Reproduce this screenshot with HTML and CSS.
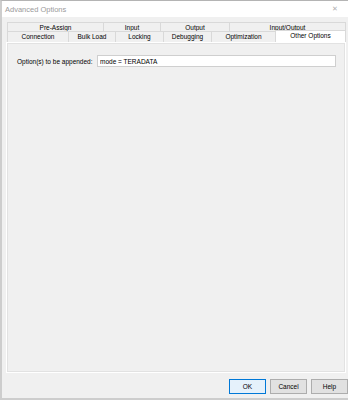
FILE: index.html
```html
<!DOCTYPE html>
<html lang="en">
<head>
    <meta charset="UTF-8">
    <title>Advanced Options</title>
    <link rel="stylesheet" href="styles.css">
</head>
<body>
    <div class="window">
        <div class="titlebar">
            <span class="title">Advanced Options</span>
            <span class="close">&#x2715;</span>
        </div>

        <div class="content">
            <div class="tabs">
                <div class="tab-row row-top">
                    <div class="tab">Pre-Assign</div>
                    <div class="tab">Input</div>
                    <div class="tab">Output</div>
                    <div class="tab">Input/Output</div>
                </div>
                <div class="tab-row row-bottom">
                    <div class="tab">Connection</div>
                    <div class="tab">Bulk Load</div>
                    <div class="tab">Locking</div>
                    <div class="tab">Debugging</div>
                    <div class="tab">Optimization</div>
                    <div class="tab active">Other Options</div>
                </div>
            </div>

            <div class="panel">
                <div class="field">
                    <label for="opts">Option(s) to be appended:</label>
                    <input type="text" id="opts" value="mode = TERADATA">
                </div>
            </div>

            <div class="buttons">
                <button class="btn default">OK</button>
                <button class="btn">Cancel</button>
                <button class="btn">Help</button>
            </div>
        </div>
    </div>
</body>
</html>
```

FILE: styles.css
```css
body {
    margin: 0;
    background-color: #f0f0f0;
    font-family: "Liberation Sans", Arial, sans-serif;
    font-size: 6.5px;
    color: #000;
}

.window {
    height: 400px;
    box-sizing: border-box;
    border-top: 1px solid #b4b4b4;
    border-left: 2px solid #cdcdcd;
    border-bottom: 2px solid #cdcdcd;
    display: flex;
    flex-direction: column;
}

.titlebar {
    height: 16px;
    background-color: #fff;
    display: flex;
    align-items: center;
    justify-content: space-between;
    padding: 0 10px 0 3px;
    color: #9b9b9b;
    font-size: 7.5px;
}

.close {
    font-size: 7px;
    color: #b0b0b0;
}

.content {
    flex: 1;
    display: flex;
    flex-direction: column;
    padding: 5px 0 0 3px;
}

.tabs {
    margin-left: 2px;
    width: 338px;
}

.tab-row {
    display: grid;
}

.row-top {
    grid-template-columns: 96px 57px 69px 116px;
    height: 9px;
}

.row-bottom {
    grid-template-columns: 61px 47px 48px 48px 64px 70px;
    height: 11px;
}

.tab {
    border: 1px solid #d9d9d9;
    border-bottom: none;
    margin-right: -1px;
    text-align: center;
    line-height: 9px;
    box-sizing: border-box;
    white-space: nowrap;
}

.row-bottom .tab {
    line-height: 10px;
}

.tab.active {
    background-color: #fff;
    border-color: #d9d9d9;
    margin-top: -1px;
    line-height: 10px;
}

.panel {
    height: 331px;
    margin-left: 1px;
    width: 340px;
    box-sizing: border-box;
    border: 1px solid #fff;
    box-shadow: inset 0 0 0 1px #e2e2e2;
    padding: 12px 9px 0 10px;
}

.field {
    display: flex;
    align-items: center;
}

.field label {
    width: 80px;
}

.field input {
    flex: 1;
    height: 12px;
    box-sizing: border-box;
    border: 1px solid #cfcfcf;
    padding: 0 2px;
    font-family: inherit;
    font-size: 6.5px;
    outline: none;
}

.buttons {
    display: flex;
    justify-content: flex-end;
    gap: 4px;
    margin-top: 6px;
}

.btn {
    width: 37px;
    height: 15px;
    padding: 0;
    font-family: inherit;
    font-size: 6.5px;
    background-color: #e1e1e1;
    border: 1px solid #adadad;
    color: #000;
}

.btn.default {
    border-color: #0078d7;
    background-color: #e5f1fb;
}
```
